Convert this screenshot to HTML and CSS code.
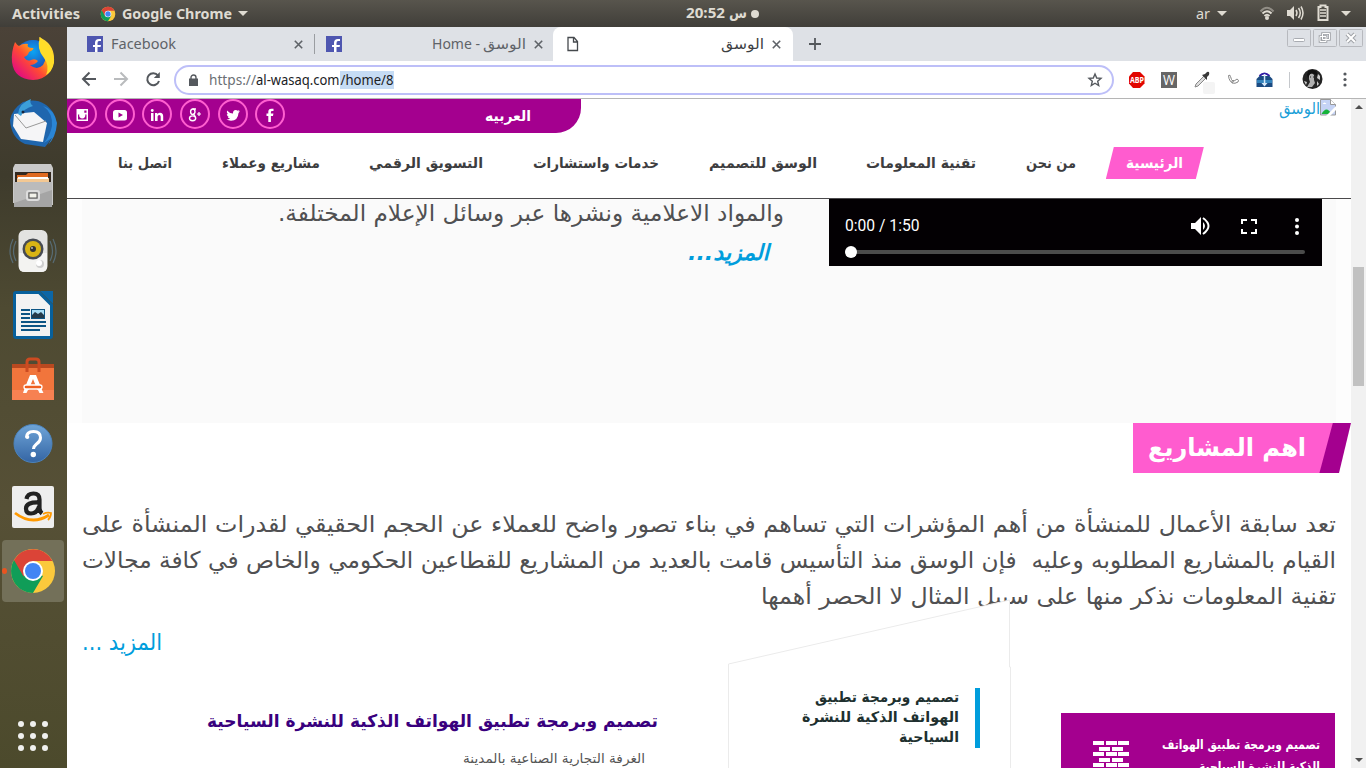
FILE: index.html
```html
<!DOCTYPE html>
<html lang="ar">
<head>
<meta charset="utf-8">
<title>الوسق</title>
<link rel="stylesheet" href="styles.css">
</head>
<body>
<div class="topbar">
  <svg class="label bold lt" width="68" height="27"><text x="0" y="19" textLength="68">Activities</text></svg>
  <svg class="mini-chrome" width="16" height="16" viewBox="0 0 48 48"><use href="#chrome"/></svg>
  <svg class="label bold lt" width="110" height="27"><text x="0" y="19" textLength="110">Google Chrome</text></svg>
  <i class="caret c1"></i>
  <div class="clock">
    <svg class="label bold lt" width="39" height="27"><text x="0" y="18" textLength="39">20:52</text></svg>
    <svg class="label bold ar" width="18" height="27"><text x="18" y="18" textLength="18">س</text></svg>
    <i class="dot"></i>
  </div>
  <svg class="label lang lt" width="14" height="27"><text x="0" y="19" textLength="14">ar</text></svg>
  <i class="caret c2"></i>
  <svg class="status" width="112" height="27" viewBox="0 0 112 27">
    <g fill="none" stroke="#dfdbd2" stroke-width="2"><path d="M20.500 11.500Q27 4 33.500 11.500" opacity=".45"/><path d="M22.500 13.500Q27 9 31.500 13.500"/><path d="M24.500 16Q27 13.500 29.500 16"/></g><circle cx="27" cy="18" r="2" fill="#dfdbd2"/>
    <path d="M47 10h3l4-4v14l-4-4h-3z" fill="#dfdbd2"/><path d="M56 10q2 3 0 6M58.500 8q3.500 5 0 10M61 6.500q4 6.500 0 13" fill="none" stroke="#dfdbd2" stroke-width="1.500"/>
    <path d="M78.500 7h2V5.500h5V7h2v13h-9z" fill="none" stroke="#dfdbd2" stroke-width="2"/><path d="M80 10h6M80 13h6M80 16h6" stroke="#dfdbd2" stroke-width="1.600"/>
    <path d="M101 11h10l-5 5z" fill="#dfdbd2"/>
  </svg>
</div>

<div class="desktop">
<aside class="dock">
  <div class="app"><svg width="48" height="48" viewBox="0 0 48 48">
    <defs><radialGradient id="ffb" cx=".5" cy=".3" r=".7"><stop offset="0" stop-color="#0aa5f5"/><stop offset="1" stop-color="#2a2a9c"/></radialGradient><linearGradient id="ffo" x1=".9" y1="0" x2=".1" y2=".8"><stop offset="0" stop-color="#fff04a"/><stop offset=".35" stop-color="#ffb414"/><stop offset=".65" stop-color="#ff4b33"/><stop offset="1" stop-color="#e6107b"/></linearGradient></defs>
    <circle cx="24" cy="24" r="19" fill="url(#ffb)"/>
    <path d="M6 7q2 3 4 4q4-3 9-2q-2 4 5 4q2 1-4 4q-1 4-5 5q3 5 7 3q4-2 7 1q-3 4-8 4q7 6 13 0q5-7 0-16q-3-6-4-12q14 6 15 20q-1 22-21 23q-19-1-21-18q-1-10 3-20z" fill="url(#ffo)"/><path d="M31 2q5 5 9 10q6 8 5 16q-2 9-8 12q4-9-2-17q-8-9-4-21z" fill="#ffdd28"/></svg></div>
  <div class="app"><svg width="48" height="48" viewBox="0 0 48 48">
    <path d="M14 3q20-6 31 12q6 16-9 33l-20-3q-14-6-15-24q2-11 13-18z" fill="#1f66ae"/><path d="M34 7q10 7 9 20q-2 10-8 17l8-5-4 7q8-8 9-22q-3-14-14-17z" fill="#2a86d6"/><path d="M5 15l20-2 13 11-4 19-22-3-8-13z" fill="#f5f5f7"/><path d="M6 16l11 13 20-7" fill="none" stroke="#999" stroke-width="1"/><path d="M9 15q1-11 13-15q-2 4 2 7q-9 2-12 10z" fill="#3c9fd9"/><circle cx="14" cy="13" r="1.500" fill="#16243f"/></svg></div>
  <div class="app"><svg width="48" height="48" viewBox="0 0 48 48">
    <path d="M4 5l2-4h36l2 4v37h-2V9H6v31H4z" fill="#c9c9c9"/><path d="M6 9h36v12H6z" fill="#33281e"/><path d="M8 12h9l2-2h20v10H8z" fill="#df6a20"/><path d="M8 15h32v4H8z" fill="#f3c893"/><path d="M9 14h30v2H9z" fill="#fff"/><path d="M5 19h38v25H5z" fill="#a5a5a5"/><path d="M5 19h38v8L5 40z" fill="#bbb"/><rect x="18" y="28" width="12" height="9" rx="2" fill="#b0b0b0" stroke="#ddd" stroke-width="2"/><rect x="20" y="30" width="8" height="5" fill="#f2f2ea" stroke="#555"/></svg></div>
  <div class="app"><svg width="48" height="48" viewBox="0 0 48 48">
    <path d="M4 12q-6 12 0 24M7 14q-5 10 0 20M44 12q6 12 0 24M41 14q5 10 0 20" fill="none" stroke="#5e7c92" stroke-width="1.200" opacity=".7"/><rect x="9.500" y="3" width="29" height="42" rx="6" fill="#e3e3e1"/><path d="M10 26h28v14q0 5-6 5H16q-6 0-6-5z" fill="#f3f3f1"/><circle cx="24" cy="22" r="10.500" fill="#474b52"/><circle cx="24" cy="22" r="8" fill="#d9b414"/><circle cx="24" cy="22" r="3" fill="#333"/><circle cx="23" cy="21" r="1" fill="#bbb"/><circle cx="31" cy="37" r="4" fill="#cfcfcf"/><circle cx="30" cy="36" r="3" fill="#fff"/></svg></div>
  <div class="app"><svg width="48" height="48" viewBox="0 0 48 48">
    <path d="M7 1.500h23L42.500 14v31q0 1.500-1.500 1.500H7.500q-2 0-2-2V3q0-1.500 1.500-1.500z" fill="#f2f2f2" stroke="#07609c" stroke-width="3"/><path d="M31 0h13v13z" fill="#0c66a6"/><path d="M12 19h9M12 23h9M12 27h9M12 31h25M12 35h25M12 39h19" stroke="#0c5484" stroke-width="2"/><rect x="22.500" y="18.500" width="13" height="9" fill="#a9ddf5" stroke="#0c5484"/><path d="M23 27v-3l3-3 3 2 3-2 3 3v3z" fill="#263b4a"/></svg></div>
  <div class="app"><svg width="48" height="48" viewBox="0 0 48 48">
    <path d="M3 9h42v7H3z" fill="#b84920"/><path d="M3 13h42v32H3z" fill="#f1753c"/><path d="M3 35h42v10H3z" fill="#f78152"/><path d="M18 17V7q0-3 3-3h6q3 0 3 3v10" fill="none" stroke="#cc4b21" stroke-width="3"/><path d="M21 20h6l6 15h-4.500l-4.500-11-4.500 11H15z" fill="#fff"/><path d="M15 35h4l-1.500 3H14zM29 35h4l1.500 3h-4z" fill="#fff"/><rect x="15" y="30" width="18" height="4" rx="2" fill="#ef5f1f" stroke="#fff" stroke-width="1.300"/></svg></div>
  <div class="app"><svg width="48" height="48" viewBox="0 0 48 48"><defs><linearGradient id="hlp" x2="0" y2="1"><stop stop-color="#6fa5d8"/><stop offset="1" stop-color="#3465a4"/></linearGradient></defs><circle cx="24" cy="24.500" r="19" fill="url(#hlp)" stroke="#4b83bd"/><path d="M17.500 18.500q0-6 7-6t7 6.200q0 3.600-4 6.300-3 2.500-3 5" fill="none" stroke="#fff" stroke-width="3"/><circle cx="18.300" cy="18" r="2" fill="#fff"/><circle cx="24.300" cy="35.500" r="2.700" fill="#fff"/></svg></div>
  <div class="app"><svg width="48" height="48" viewBox="0 0 48 48"><rect x="3" y="3" width="42" height="42" rx="2" fill="#eee"/><path d="M17.500 16q1-5.500 7-5.500t6 6v8q0 4 2.500 6M30 19.500q-13-.5-13 6 0 5 5 5 6 0 8-7" fill="none" stroke="#222" stroke-width="4.200"/><path d="M6 30q17 13 34 2" fill="none" stroke="#ff9900" stroke-width="2.800"/><path d="M34 31q4-2 8-1q0 4-3 7" fill="none" stroke="#ff9900" stroke-width="1.800"/></svg></div>
  <div class="app active"><svg width="48" height="48" viewBox="0 0 48 48"><g id="chrome"><circle cx="24" cy="24" r="22" fill="#fbc93c"/><path d="M24 24L5 13A22 22 0 0 0 24 46L34 29z" fill="#109d58"/><path d="M5 13A22 22 0 0 1 43.500 14H24L14.500 29.500z" fill="#db4437"/><circle cx="24" cy="24" r="10" fill="#fff"/><circle cx="24" cy="24" r="8" fill="#4285f4"/></g></svg></div>
  <div class="grid9"><i></i><i></i><i></i><i></i><i></i><i></i><i></i><i></i><i></i></div>
</aside>

<main class="browser">
  <div class="tabs">
    <div class="tab t1">
      <svg width="16" height="16" viewBox="0 0 16 16"><path d="M0 0h16v16H0z" fill="#4e56b0"/><path d="M8 16v-5H6V9h2V7q0-4 4-4h2v2h-2q-1.500 0-1.500 2v2H14l-.4 2h-3.100v5z" fill="#fff"/></svg>
      <svg class="tabtext lt" width="65" height="20"><text x="0" y="15" textLength="65">Facebook</text></svg>
      <svg class="x" width="9" height="9"><path d="M.8.800l7.400 7.400m0-7.400L.8 8.200"/></svg>
    </div>
    <div class="tab t2">
      <svg width="16" height="16" viewBox="0 0 16 16"><path d="M0 0h16v16H0z" fill="#4e56b0"/><path d="M8 16v-5H6V9h2V7q0-4 4-4h2v2h-2q-1.500 0-1.500 2v2H14l-.4 2h-3.100v5z" fill="#fff"/></svg>
      <svg class="tabtext lt" width="48" height="20"><text x="0" y="15" textLength="48">Home -</text></svg>
      <svg class="tabtext ar" width="43" height="20"><text x="43" y="15" textLength="43">الوسق</text></svg>
      <svg class="x" width="9" height="9"><path d="M.8.800l7.400 7.400m0-7.400L.8 8.200"/></svg>
    </div>
    <div class="tab t3">
      <svg width="12" height="16"><path d="M1 1.500h6l3.500 4V14.500H1zM6.500 1.500v4.500h4" fill="none" stroke="#45494d" stroke-width="1.300"/></svg>
      <svg class="tabtext ar dark" width="43" height="20"><text x="43" y="15" textLength="43">الوسق</text></svg>
      <svg class="x" width="9" height="9"><path d="M.8.800l7.400 7.400m0-7.400L.8 8.200"/></svg>
    </div>
    <svg class="plus" width="12" height="12"><path d="M6 0v12M0 6h12" stroke="#54585c" stroke-width="1.800"/></svg>
    <div class="winbtns">
      <svg width="24" height="18"><rect class="wb" x=".5" y=".5" width="23" height="17" rx="1"/><rect x="6.500" y="9.500" width="11" height="3" rx="1" fill="#fff" stroke="#a9acb2"/></svg>
      <svg width="24" height="18"><rect class="wb" x=".5" y=".5" width="23" height="17" rx="1"/><g fill="none"><path d="M9.500 4.500h7v6h-7zM7 7.500h6v5H7z" stroke="#a0a3a8" stroke-width="2.600"/><path d="M9.500 4.500h7v6h-7zM7 7.500h6v5H7z" stroke="#fff"/></g></svg>
      <svg width="24" height="18"><rect class="wb" x=".5" y=".5" width="23" height="17" rx="1"/><path d="M8 5l8 8m0-8l-8 8" stroke="#a0a3a8" stroke-width="4"/><path d="M8 5l8 8m0-8l-8 8" stroke="#fff" stroke-width="2"/></svg>
    </div>
  </div>

  <div class="toolbar">
    <svg class="navbtns" width="100" height="37" viewBox="0 0 100 37"><g fill="none" stroke-width="2"><path d="M29 18H16M22.500 11.500L16 18l6.500 6.500" stroke="#54585d"/><path d="M47 18h13M53.500 11.500L60 18l-6.500 6.500" stroke="#b9bbbd"/><path d="M91 14.500A6 6 0 1 0 92 20" stroke="#54585d"/></g><path d="M92.800 11v6h-6z" fill="#54585d"/></svg>
    <div class="omni">
      <svg class="lock" width="9" height="12"><path d="M0 4.500h9V12H0z" fill="#55595e"/><path d="M2 5V3.500a2.500 2.500 0 0 1 5 0V5" fill="none" stroke="#55595e" stroke-width="1.400"/></svg>
      <svg class="url lt" width="47" height="20"><text x="0" y="15" textLength="47" fill="#6b6f74">https://</text></svg>
      <svg class="url lt" width="84" height="20"><text x="0" y="15" textLength="83.500">al-wasaq.com</text></svg>
      <svg class="url lt sel" width="54" height="18"><text x="0.500" y="14" textLength="53">/home/8</text></svg>
      <svg class="star" width="14" height="14" viewBox="0 0 14 14"><path d="M7 1l1.700 4 4.300.4-3.300 2.800 1 4.300L7 10.200l-3.700 2.300 1-4.300L1 5.400 5.300 5z" fill="none" stroke="#55595e" stroke-width="1.400"/></svg>
    </div>
    <svg class="ext" width="230" height="37" viewBox="0 0 230 37">
      <g transform="translate(-7)"><path d="M12 11h7l4.500 4.500v7L19 27h-7l-4-4.500v-7z" fill="#e10600"/><text x="9" y="22.200" textLength="14" class="abp">ABP</text></g>
      <path d="M33 11h16v16H33z" fill="#666"/><text x="35" y="24" textLength="12" class="w">W</text>
      <path d="M67 26l1-3 8-8 2 2-8 8z" fill="#ddd" stroke="#888"/><path d="M74 14l3-1 2-2q3-1 2 3l-2 2v3z" fill="#383838"/><rect x="75" y="21" width="12" height="12" rx="2" fill="#f4f4f4"/>
      <path d="M100.500 14.500q2-1 2 1l1 3 2 2q-1 2-3 0-2-3-2-6zM104 19.500q3 1 5-1.500 2.500 1 1 3-3 2-6 1z" fill="#fff" stroke="#888"/>
      <path d="M131.500 15q5-5 10 0" stroke="#321da5" stroke-width="2" fill="none"/><path d="M128.500 18l3-3h10l3 3v8h-16z" fill="#1b4b82"/><path d="M129 19h15v3h-15z" fill="#3484bd"/><path d="M135.800 13h1.500v9h2.200l-3 3.500-3-3.500h2.300z" fill="#d6e9fa"/>
      <path d="M161.500 11v16" stroke="#c5c8cc"/>
      <circle cx="184.500" cy="18" r="10" fill="#242424"/><path d="M179 26l3-5-1-3v-4q3-3 5 0v5l1 3-3 4z" fill="#b0b0b0"/><path d="M179 14q1-6 6-5 5 0 4 6-4-4-7-2l-2 4z" fill="#111"/><path d="M190 13l2 2v4l-3-2zM176 20l3 1-1 3zM189 20l2 3-2 2z" fill="#ccc"/><path d="M182 16h1M185 16h1" stroke="#222"/>
      <g fill="#54585d"><circle cx="217" cy="13" r="1.600"/><circle cx="217" cy="18.500" r="1.600"/><circle cx="217" cy="24" r="1.600"/></g>
    </svg>
  </div>

  <div class="viewport">
    <div class="site">
      <header class="site-head">
        <div class="strip">
          <div class="social">
            <span><svg width="14" height="14" viewBox="0 0 14 14"><path d="M1.500 1h11.500v12H1.500z" fill="#fff"/><path d="M3 6.500v5h8.500v-5h-1.300a3.100 3.100 0 1 1-5.900 0zM9.300 2.500h2.200v2.200H9.300z" fill="#a4008f"/><circle cx="7.250" cy="7.300" r="1.900" fill="#fff"/></svg></span>
            <span><svg width="14" height="14" viewBox="0 0 14 14"><rect y="2" width="14" height="10.500" rx="2.500" fill="#fff"/><path d="M5.500 4.500v5l4.500-2.500z" fill="#a4008f"/></svg></span>
            <span><svg width="14" height="14" viewBox="0 0 14 14"><path d="M1 5h2.500v8H1zM5 5h2.400v1.200Q8.500 4.800 10 4.800q3.200 0 3.200 3.500V13h-2.500V8.800q0-1.800-1.400-1.800-1.700 0-1.700 1.800V13H5z" fill="#fff"/><circle cx="2.250" cy="2.500" r="1.400" fill="#fff"/></svg></span>
            <span><svg width="14" height="14" viewBox="0 0 14 14"><g fill="none" stroke="#fff" stroke-width="1.400"><ellipse cx="4.800" cy="3.700" rx="2.200" ry="2.700"/><ellipse cx="4.600" cy="10.300" rx="3.100" ry="2.400"/><path d="M4.500 1H8M5 6q2 1 2 3"/><path d="M9 6h4M11 4v4" stroke-width="1.200"/></g></svg></span>
            <span><svg width="14" height="14" viewBox="0 0 14 14"><path d="M1 2.500Q3.500 5.500 7 5.500q-.2-3.500 2.800-3.600 1 0 1.900.8L13.500 2l-1 1.600 1.500-.3-1.500 1.600Q12 12.500 5 12.700 2.500 12.500.500 11.500q2.300 0 3.600-1Q2.200 10.300 1.600 8.700h1.200Q.8 8 .8 5.900l1.200.3Q.300 4.500 1 2.500z" fill="#fff"/></svg></span>
            <span><svg width="14" height="14" viewBox="0 0 14 14"><path d="M5.300 14V8H3.500V5.500h1.800V3.800Q5.300.700 8.300.700h2.200v2.400H9q-1.100 0-1.100 1.100v1.300h2.500L10 8H7.900v6z" fill="#fff"/></svg></span>
          </div>
          <svg class="kufi white bold" width="46" height="34"><text x="46" y="22" textLength="46">العربيه</text></svg>
        </div>
        <div class="logo">
          <svg width="57" height="20"><text x="41" y="15" textLength="41" class="alt">الوسق</text><path d="M41.500.500h10l5 5v10.500h-15z" fill="#c5d3f5" stroke="#999"/><path d="M42.500 15q5-9 10 0z" fill="#16b33a"/><path d="M43.500 5q2-3 4 0z" fill="#fff"/><path d="M51.500.500v5h5" fill="#fff" stroke="#999"/><path d="M57 7L47 17h4l6-6z" fill="#fff"/></svg>
        </div>
        <nav>
          <svg class="kufi nav bold" width="54" height="32"><text x="54" y="21" textLength="54">اتصل بنا</text></svg>
          <svg class="kufi nav bold" width="98" height="32"><text x="98" y="21" textLength="98">مشاريع وعملاء</text></svg>
          <svg class="kufi nav bold" width="114" height="32"><text x="114" y="21" textLength="114">التسويق الرقمي</text></svg>
          <svg class="kufi nav bold" width="126" height="32"><text x="126" y="21" textLength="126">خدمات واستشارات</text></svg>
          <svg class="kufi nav bold" width="108" height="32"><text x="108" y="21" textLength="108">الوسق للتصميم</text></svg>
          <svg class="kufi nav bold" width="110" height="32"><text x="110" y="21" textLength="110">تقنية المعلومات</text></svg>
          <svg class="kufi nav bold" width="50" height="32"><text x="50" y="21" textLength="50">من نحن</text></svg>
          <div class="current"><svg class="kufi white bold" width="57" height="32"><text x="57" y="21" textLength="57">الرئيسية</text></svg></div>
        </nav>
      </header>

      <section class="about">
        <div class="about-text">
          <svg class="kufi body" width="506" height="36"><text x="506" y="22" textLength="506">والمواد الاعلامية ونشرها عبر وسائل الإعلام المختلفة.</text></svg>
          <svg class="kufi more" width="82" height="36"><text x="81" y="25" textLength="81">المزيد...</text></svg>
        </div>
        <div class="video">
          <div class="controls">
            <svg class="time" width="76" height="24"><text x="0" y="17" textLength="74.500">0:00 / 1:50</text></svg>
            <svg width="112" height="24" viewBox="0 0 112 24"><g fill="#fff"><path d="M0 9h4l6-6v18l-6-6H0z"/><path d="M12 8q4 4 0 8z"/><circle cx="106" cy="6" r="2"/><circle cx="106" cy="12.500" r="2"/><circle cx="106" cy="19" r="2"/></g><path d="M12 4q11 8 0 16" fill="none" stroke="#fff" stroke-width="2"/><path d="M51 10V6h5M60 6h5v4M65 15v4h-5M56 19h-5v-4" fill="none" stroke="#fff" stroke-width="2"/></svg>
          </div>
          <div class="track"><i></i></div>
        </div>
      </section>

      <section class="projects">
        <div class="heading">
          <div class="title"><svg class="kufi white h2" width="158" height="50"><text x="158" y="33" textLength="158">اهم المشاريع</text></svg></div>
        </div>
        <div class="para">
          <svg class="kufi body" width="1254" height="36"><text x="1254" y="23" textLength="1254">تعد سابقة الأعمال للمنشأة من أهم المؤشرات التي تساهم في بناء تصور واضح للعملاء عن الحجم الحقيقي لقدرات المنشأة على</text></svg>
          <svg class="kufi body" width="1254" height="36"><text x="1254" y="23" textLength="1254">القيام بالمشاريع المطلوبه وعليه &nbsp;فإن الوسق منذ التأسيس قامت بالعديد من المشاريع للقطاعين الحكومي والخاص في كافة مجالات</text></svg>
          <svg class="kufi body" width="575" height="36"><text x="575" y="23" textLength="575">تقنية المعلومات نذكر منها على سبيل المثال لا الحصر أهمها</text></svg>
        </div>
        <svg class="kufi link" width="80" height="46"><text x="80" y="33" textLength="80">المزيد ...</text></svg>

        <div class="cards">
          <div class="details">
            <svg class="kufi purple" width="452" height="30"><text x="452" y="20" textLength="451">تصميم وبرمجة تطبيق الهواتف الذكية للنشرة السياحية</text></svg>
            <svg class="kufi small" width="182" height="30"><text x="182" y="19" textLength="182">الغرفة التجارية الصناعية بالمدينة</text></svg>
          </div>
          <div class="slant">
            <svg class="shape" width="284" height="170"><path d="M.5 170V65L281.500 1v67h1v102z" fill="#fff" stroke="#ebebeb"/></svg>
            <div class="quote">
              <svg class="kufi ink bold" width="144" height="20"><text x="144" y="14" textLength="144">تصميم وبرمجة تطبيق</text></svg>
              <svg class="kufi ink bold" width="157" height="20"><text x="157" y="14" textLength="157">الهواتف الذكية للنشرة</text></svg>
              <svg class="kufi ink bold" width="60" height="20"><text x="60" y="14" textLength="60">السياحية</text></svg>
            </div>
          </div>
          <div class="project">
            <svg width="36" height="32" viewBox="0 0 36 32"><g fill="#fff"><path d="M0 0h11v4H0zM13 0h11v4H13zM25 0h11v4H25zM6 6h11v4H6zM19 6h11v4H19zM0 11h11v4H0zM13 11h11v4H13zM25 11h11v4H25zM6 17h11v4H6zM19 17h11v4H19zM0 22h11v4H0zM13 22h11v4H13zM25 22h11v4H25z"/></g></svg>
            <div class="ptext">
              <svg class="kufi white pt" width="158" height="20"><text x="158" y="14" textLength="158">تصميم وبرمجة تطبيق الهواتف</text></svg>
              <svg class="kufi white pt" width="121" height="20"><text x="121" y="16" textLength="121">الذكية للنشرة السياحية</text></svg>
            </div>
          </div>
        </div>
      </section>
    </div>
    <div class="scroll"><i class="up"></i><i class="thumb"></i><i class="down"></i></div>
  </div>
</main>
</div>
<script src="main.js"></script>
</body>
</html>
```
FILE: main.js
```js
document.querySelectorAll('text[textLength]').forEach(function (t) {
  t.setAttribute('lengthAdjust', 'spacingAndGlyphs');
});
```
FILE: styles.css
```css
* { box-sizing: border-box; }
body { margin: 0; width: 1366px; height: 768px; overflow: hidden; font-family: "Noto Sans", "DejaVu Sans", sans-serif; background: #fff; }
svg { display: block; flex: none; overflow: visible; }
i { display: block; flex: none; }
.ar text, .kufi text, .alt { direction: rtl; font-family: "DejaVu Sans", sans-serif; }
.bold { font-weight: 700; }

.topbar { height: 27px; background: linear-gradient(#58554d, #403e39); display: flex; align-items: center; padding-left: 12px; }
.label { fill: #dfdbd2; font-size: 14px; }
.mini-chrome { margin: 0 6px 0 20px; }
.caret { border: 5px solid transparent; border-top-color: #dfdbd2; border-bottom: 0; }
.c1 { margin-left: 6px; }
.clock { display: flex; align-items: center; gap: 2px; margin-left: 438px; width: 75px; }
.clock .ar { margin: 0 2px 0 2px; }
.dot { width: 8px; height: 8px; border-radius: 50%; background: #dfdbd2; }
.lang { margin-left: 435px; }
.c2 { margin-left: 7px; }
.status { margin-left: auto; margin-right: 14px; }

.desktop { display: flex; height: 741px; }
.dock { width: 67px; flex: none; padding-right: 2px; background: linear-gradient(#4b4238 0, #3e3b2c 20%, #4e4a32 38%, #565036 65%, #4c4a2c 100%); display: flex; flex-direction: column; align-items: center; }
.app { width: 62px; height: 62px; margin: 1px 0; display: flex; align-items: center; justify-content: center; }
.active { background: #737059; border-radius: 4px; position: relative; }
.active::before { content: ""; position: absolute; left: 0; top: 28px; width: 5px; height: 6px; border-radius: 50%; background: #e95420; }
.grid9 { display: grid; grid-template-columns: repeat(3, 6px); gap: 6px; margin-top: 118px; }
.grid9 i { width: 6px; height: 6px; border-radius: 50%; background: #f0f0ee; }

.browser { width: 1299px; display: flex; flex-direction: column; }
.tabs { height: 34px; background: #dee1e6; display: flex; align-items: center; }
.tab { height: 34px; display: flex; align-items: center; }
.tabtext { fill: #5f6368; font-size: 14.500px; }
.dark { fill: #3c4043; }
.x { margin-left: auto; fill: none; stroke: #5f6368; stroke-width: 1.600; }
.t1 { width: 248px; padding: 0 12px 0 20px; gap: 8px; position: relative; }
.t1::after { content: ""; position: absolute; right: 0; top: 7px; height: 20px; width: 1px; background: #9a9da1; }
.t2 { width: 238px; padding: 0 10px 0 11px; }
.t2 .lt { margin-left: auto; margin-right: 3px; }
.t2 .x { margin-left: 8px; }
.t3 { width: 240px; background: #fff; border-radius: 8px 8px 0 0; padding: 0 12px 0 14px; }
.t3 .ar { margin-left: auto; }
.t3 .x { margin-left: 8px; }
.plus { margin-left: 16px; }
.winbtns { display: flex; gap: 2px; margin: -12px 3px 0 auto; }
.wb { fill: #dee1e6; stroke: #b7b9be; }

.toolbar { height: 38px; background: #fff; border-bottom: 1px solid #b5b5b5; display: flex; }
.omni { width: 940px; height: 30px; margin: 4px 0 0 7px; border: 2px solid #bdbff8; border-radius: 15px; display: flex; align-items: center; padding: 0 10px 0 13px; }
.lock { margin-right: 11px; }
.url { font-size: 14px; fill: #202124; }
.sel { background: #c6dcf4; }
.star { margin-left: auto; }
.ext { margin-left: 14px; }
.abp { font: 700 8px "Open Sans", sans-serif; fill: #fff; }
.w { font: 14px "Open Sans", sans-serif; fill: #fff; }

.viewport { display: flex; height: 669px; overflow: hidden; }
.site { width: 1284px; flex: none; height: 669px; overflow: hidden; }
.site-head { height: 100px; border-bottom: 1px solid #4b4a4c; display: grid; grid-template-columns: 514px 1fr; grid-template-rows: 34px 1fr; }
.strip { background: #a4008f; border-radius: 0 0 25px 0; display: flex; justify-content: space-between; padding-right: 50px; }
.social { display: flex; gap: 7.700px; }
.social span { width: 30px; height: 30px; border: 2px solid #ff5fd0; border-radius: 50%; display: flex; align-items: center; justify-content: center; }
.social svg { margin-top: 1px; }
.logo { display: flex; justify-content: flex-end; padding-right: 15px; }
.alt { font-size: 16px; fill: #1b9fd8; }
.kufi { font-size: 14.500px; }
.nav { fill: #3d3d3f; }
.white { fill: #fff; }
nav { grid-column: 1 / 3; display: flex; gap: 49.700px; padding: 14px 0 0 51px; }
.current { width: 98px; height: 32px; margin-left: -20px; padding-left: 20px; background: #ff5ccf; clip-path: polygon(8px 0, 100% 0, 90px 100%, 0 100%); }
.body { font-size: 23px; fill: #505052; }

.about { height: 224px; background: #fafafa; border: solid #fdfdfd; border-width: 0 15px; display: flex; justify-content: flex-end; }
.about-text { display: flex; flex-direction: column; align-items: flex-end; width: 506px; margin-right: 45px; }
.more { font-size: 22px; font-weight: 700; font-style: italic; fill: #009ddc; margin-right: 14px; }
.video { width: 493px; height: 67px; margin-right: 14px; background: #030003; padding: 15px 17px 0 16px; }
.controls { display: flex; justify-content: space-between; width: 458px; }
.time { font: 16px Roboto, sans-serif; fill: #fff; }
.track { height: 4px; background: #4b4b4b; border-radius: 2px; margin-top: 12px; display: flex; align-items: center; }
.track i { width: 12px; height: 12px; background: #fff; border-radius: 50%; }

.heading { height: 50px; display: flex; justify-content: flex-end; }
.title { width: 218px; background: linear-gradient(105deg, #ff5ccf 0 192.500px, #a4008f 193.500px); clip-path: polygon(0 0, 100% 0, 206px 100%, 0 100%); padding-left: 15px; }
.h2 { font-size: 25px; font-weight: 700; }
.para { padding: 36px 15px 0; display: flex; flex-direction: column; align-items: flex-end; }
.link { margin-left: 15px; font-size: 23px; fill: #009ddc; }
.cards { display: flex; margin-top: -63px; height: 170px; }
.details { width: 661px; padding: 107px 70px 0 0; display: flex; flex-direction: column; align-items: flex-end; gap: 7px; }
.purple { font-size: 17.500px; font-weight: 700; fill: #39007e; }
.small { font-size: 13px; fill: #555; margin-right: 13px; }
.slant { width: 284px; position: relative; }
.shape { position: absolute; left: 0; top: -1px; }
.quote { position: relative; margin: 88px 32px 0 50px; padding-right: 16px; border-right: 5px solid #009ddc; height: 60px; display: flex; flex-direction: column; align-items: flex-end; }
.ink { fill: #20302f; }
.project { width: 274px; margin: 113px 0 0 49px; background: #a4008f; padding: 28px 15px 0 32px; display: flex; justify-content: space-between; }
.ptext { margin-top: -6px; display: flex; flex-direction: column; align-items: flex-end; }
.pt { font-size: 13px; font-weight: 700; }

.scroll { width: 15px; background: #f1f1f1; display: flex; flex-direction: column; align-items: center; padding: 6px 0; }
.up { border: 4px solid transparent; border-bottom-color: #505050; border-top: 0; }
.thumb { width: 11px; height: 119px; background: #c1c1c1; margin-top: 158px; }
.down { border: 4px solid transparent; border-top-color: #505050; border-bottom: 0; margin-top: auto; }
```
